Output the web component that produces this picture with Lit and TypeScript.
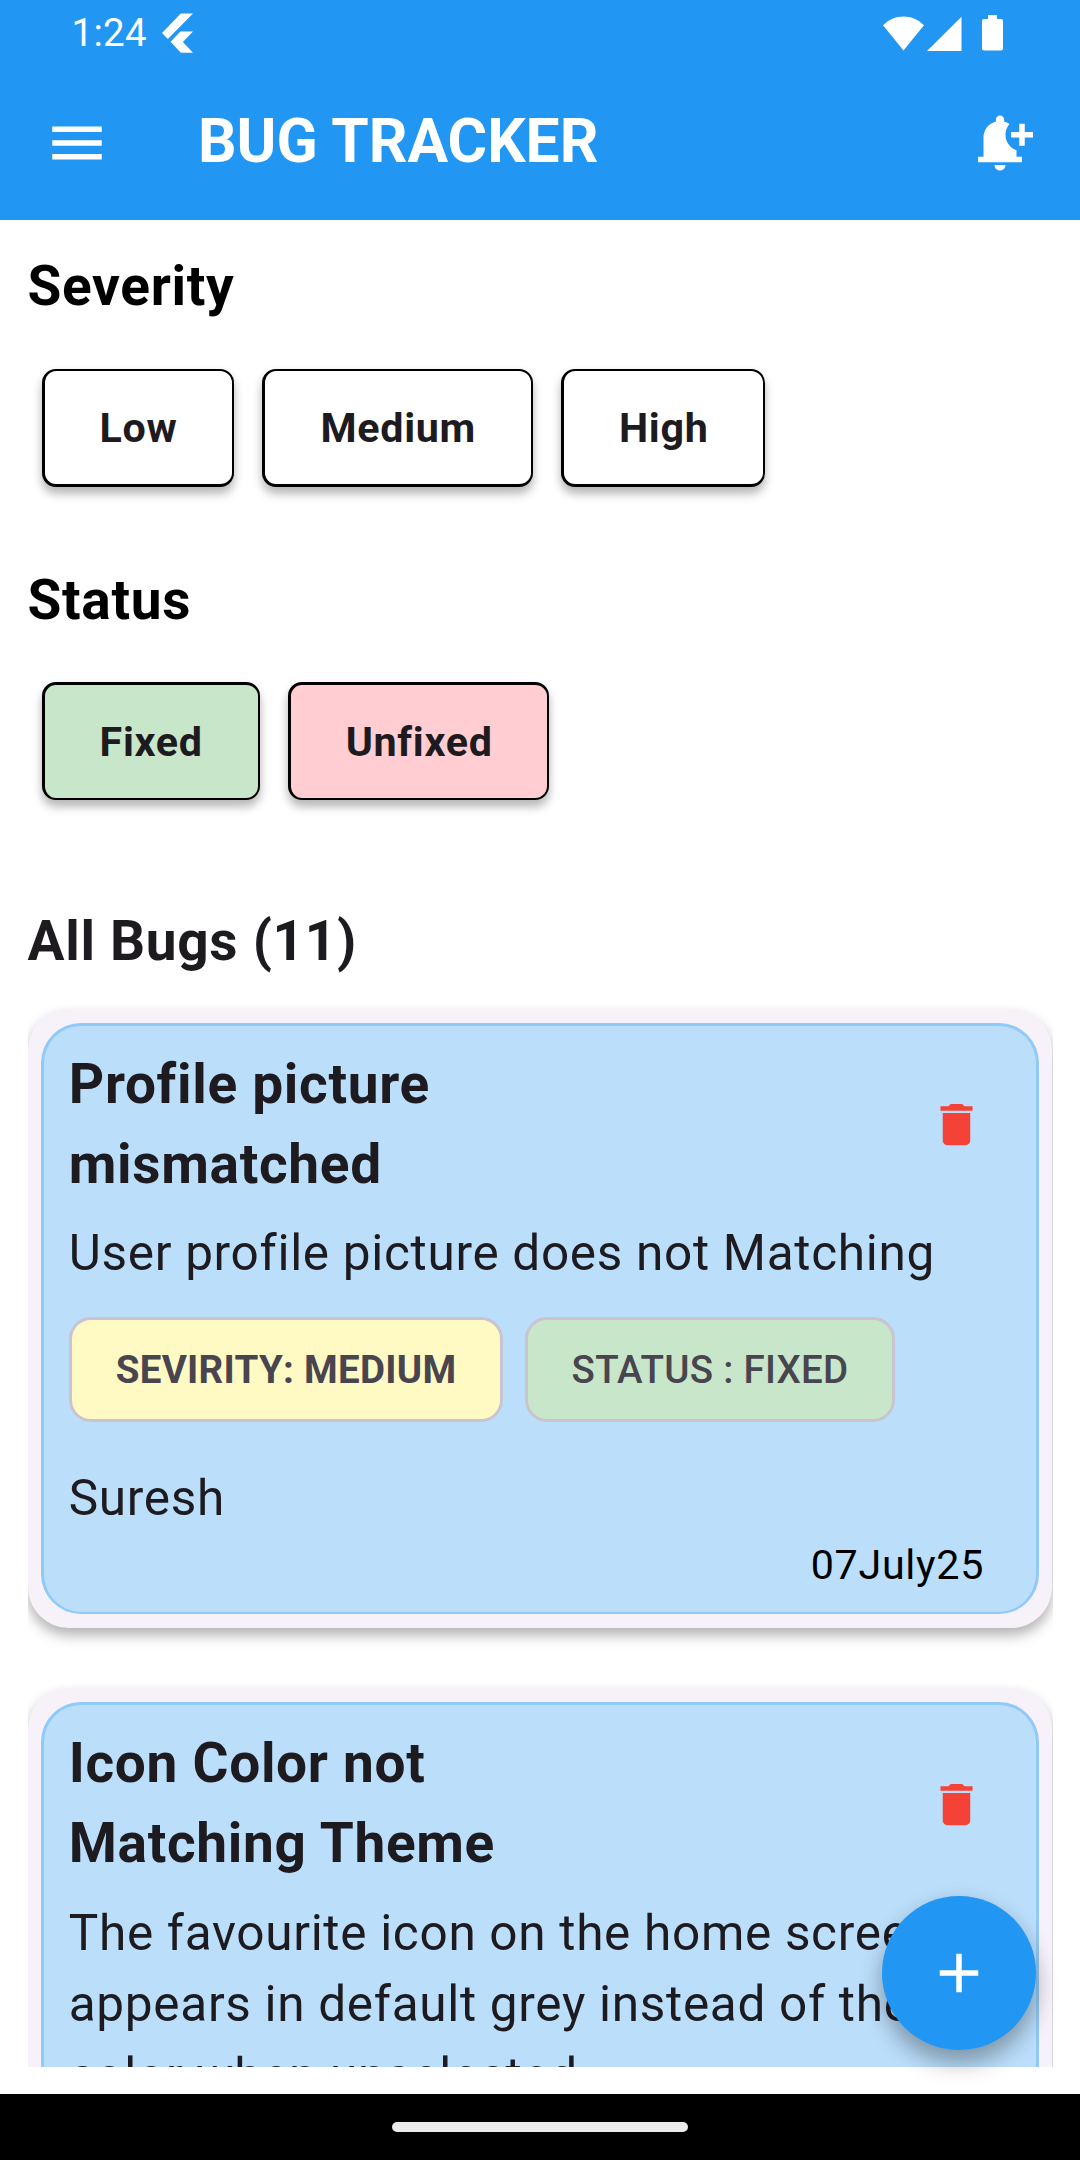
import { LitElement, html, css, nothing } from "lit";
import { customElement, property } from "lit/decorators.js";
import { classMap } from "lit/directives/class-map.js";

interface Bug {
  title: string;
  description: string;
  severity?: string;
  status?: string;
  reporter?: string;
  date?: string;
}

const bugs: Bug[] = [
  {
    title: "Profile picture mismatched",
    description: "User profile picture does not Matching",
    severity: "MEDIUM",
    status: "FIXED",
    reporter: "Suresh",
    date: "07July25",
  },
  {
    title: "Icon Color not Matching Theme",
    description:
      "The favourite icon on the home screen\nappears in default grey instead of theme\ncolor when unselected.",
  },
];

@customElement("status-bar")
class StatusBar extends LitElement {
  static styles = css`
    :host {
      display: flex;
      align-items: center;
      height: 66px;
      padding: 0 77px 0 71.5px;
      box-sizing: border-box;
      color: #fff;
      font-size: 38.5px;
      line-height: 46px;
    }
    .time {
      flex: 1;
      display: flex;
      align-items: center;
      gap: 15px;
      letter-spacing: 0.3px;
    }
    svg {
      display: block;
      fill: #fff;
    }
    .battery {
      margin-left: 20px;
    }
    .signal {
      margin-left: 3px;
    }
  `;

  render() {
    return html`
      <div class="time">
        <span>1:24</span>
        <svg width="31" height="40" viewBox="0 0 31 40">
          <path d="M18.8 0.5H31L5.8 26.1 0 20z" />
          <path d="M18.4 18.4H31L20.9 29 31 39.7H18.8L8.6 28.7z" />
        </svg>
      </div>
      <svg width="41" height="35" viewBox="0 0 41 35">
        <path d="M0 9.3C5.5 3.6 12.7.4 20.5.4S35.5 3.6 41 9.3L20.5 34.6z" />
      </svg>
      <svg class="signal" width="35" height="35" viewBox="0 0 35 35">
        <path d="M0 35L34.5 .7V35z" />
      </svg>
      <svg class="battery" width="21" height="36" viewBox="0 0 21 36">
        <path
          d="M6 0h9v4h4q2 0 2 2v27.5q0 2-2 2H2q-2 0-2-2V6q0-2 2-2h4z"
        />
      </svg>
    `;
  }
}

@customElement("app-bar")
class AppBar extends LitElement {
  static styles = css`
    :host {
      display: flex;
      align-items: center;
      height: 154px;
      padding: 0 47px 0 44px;
      box-sizing: border-box;
      color: #fff;
    }
    svg {
      display: block;
      width: 66px;
      height: 66px;
      fill: #fff;
    }
    .title {
      flex: 1;
      margin: 0 0 0 88px;
      padding-bottom: 3px;
      font-size: 60.5px;
      line-height: 76px;
      font-weight: 700;
    }
  `;

  render() {
    return html`
      <svg viewBox="0 0 24 24">
        <path d="M3 18h18v-2H3v2zm0-5h18v-2H3v2zm0-7v2h18V6H3z" />
      </svg>
      <h1 class="title">BUG TRACKER</h1>
      <svg viewBox="0 0 24 24">
        <path
          d="M10 20h4c0 1.1-.9 2-2 2s-2-.9-2-2zm4-11c0 2.61 1.67 4.83 4 5.66V17h2v2H4v-2h2v-7c0-2.79 1.91-5.14 4.5-5.8v-.7c0-.83.67-1.5 1.5-1.5s1.5.67 1.5 1.5v.7c.71.18 1.36.49 1.95.9A5.902 5.902 0 0 0 14 9zm10-1h-3V5h-2v3h-3v2h3v3h2v-3h3V8z"
        />
      </svg>
    `;
  }
}

@customElement("filter-button")
class FilterButton extends LitElement {
  @property() label = "";
  @property() tone = "plain";

  static styles = css`
    .box {
      display: flex;
      align-items: center;
      height: 118px;
      box-sizing: border-box;
      padding: 2px 54.9px 0 55.1px;
      border: solid #000;
      border-width: 2px 2px 3px 3px;
      border-radius: 14px;
      background: #fff;
      color: #1d1b20;
      font-size: 41.25px;
      line-height: 59px;
      font-weight: 700;
      letter-spacing: 0.6875px;
      white-space: nowrap;
      box-shadow:
        0 7px 10px rgba(0, 0, 0, 0.25),
        0 3px 12px rgba(0, 0, 0, 0.06);
    }
    .fixed {
      background: #c8e6c9;
      border-width: 3px 2px 2px 3px;
    }
    .unfixed {
      background: #ffcdd2;
      border-width: 3px 2px 2px 3px;
    }
  `;

  render() {
    return html`<div
      class=${classMap({
        box: true,
        fixed: this.tone === "fixed",
        unfixed: this.tone === "unfixed",
      })}
    >
      ${this.label}
    </div>`;
  }
}

@customElement("bug-card")
class BugCard extends LitElement {
  @property({ attribute: false }) bug!: Bug;

  static styles = css`
    :host {
      display: block;
      box-sizing: border-box;
      padding: 13.75px 13px 13.75px 13.75px;
      border-radius: 41px;
      background: #f7f2fa;
      box-shadow:
        0 8px 13px rgba(0, 0, 0, 0.26),
        0 3px 12px rgba(0, 0, 0, 0.06);
    }
    .panel {
      box-sizing: border-box;
      padding: 19.2px 24.5px 17.5px;
      border: 3px solid #90caf9;
      border-bottom-width: 2px;
      border-radius: 40px;
      background: #bbdefb;
      color: #1d1b20;
      letter-spacing: 0.6875px;
    }
    .head {
      display: flex;
      align-items: center;
      justify-content: space-between;
    }
    .title {
      margin: 0;
      width: 480px;
      font-size: 55px;
      line-height: 79.75px;
      font-weight: 700;
    }
    .delete {
      display: block;
      width: 55px;
      height: 55px;
      margin: 0 28px 0 0;
      fill: #f44336;
    }
    .description,
    .reporter {
      margin: 14px 0 0;
      font-size: 49.5px;
      line-height: 71.5px;
      white-space: pre;
    }
    .chips {
      display: flex;
      gap: 21.5px;
      margin-top: 26.8px;
    }
    .chip {
      display: flex;
      align-items: center;
      height: 105px;
      box-sizing: border-box;
      padding: 0 43.6px 0 44px;
      border: 3px solid #cac4d0;
      border-radius: 22px;
      color: #49454f;
      font-size: 38.5px;
      line-height: 55px;
      letter-spacing: 0.275px;
      white-space: pre;
    }
    .severity {
      background: #fff9c4;
      font-weight: 700;
    }
    .status {
      background: #c8e6c9;
      font-weight: 500;
    }
    .reporter {
      margin-top: 41px;
    }
    .date {
      margin: 1.5px 27.5px 0 0;
      text-align: right;
      color: #000;
      font-size: 41.25px;
      line-height: 59px;
    }
  `;

  render() {
    const b = this.bug;
    return html`
      <div class="panel">
        <div class="head">
          <h3 class="title">${b.title}</h3>
          <svg class="delete" viewBox="0 0 24 24">
            <path
              d="M6 19c0 1.1.9 2 2 2h8c1.1 0 2-.9 2-2V7H6v12zM19 4h-3.5l-1-1h-5l-1 1H5v2h14V4z"
            />
          </svg>
        </div>
        <p class="description">${b.description}</p>
        ${b.severity
          ? html`<div class="chips">
              <div class="chip severity">SEVIRITY: ${b.severity}</div>
              <div class="chip status">STATUS : ${b.status}</div>
            </div>`
          : nothing}
        ${b.reporter
          ? html`<p class="reporter">${b.reporter}</p>
              <p class="date">${b.date}</p>`
          : nothing}
      </div>
    `;
  }
}

@customElement("app-root")
class AppRoot extends LitElement {
  static styles = css`
    :host {
      display: flex;
      flex-direction: column;
      position: relative;
      width: 1080px;
      height: 2160px;
      overflow: hidden;
      background: #fff;
      font-family: Roboto, "Liberation Sans", sans-serif;
    }
    .top {
      flex: none;
      background: #2196f3;
    }
    .page {
      flex: 1;
      min-height: 0;
      display: flex;
      flex-direction: column;
      padding: 26.5px 27px 27.5px 27.5px;
    }
    .heading {
      margin: 0;
      flex: none;
      font-size: 55px;
      line-height: 78.5px;
      font-weight: 700;
      letter-spacing: 0.6875px;
      color: #000;
    }
    .filters {
      flex: none;
      display: flex;
      gap: 28px;
      padding: 44px 13.75px 73.5px 14px;
    }
    .filters.last {
      padding: 43px 13.75px 101.5px 14px;
    }
    .heading.count {
      color: #1d1b20;
    }
    .list {
      flex: 1;
      min-height: 0;
      margin-top: 15px;
      padding: 14px 1px 0 0;
      overflow: hidden;
      display: flex;
      flex-direction: column;
      gap: 60.5px;
    }
    bug-card {
      flex: none;
    }
    .nav {
      flex: none;
      height: 66px;
      background: #000;
      display: flex;
      align-items: center;
      justify-content: center;
    }
    .pill {
      width: 296px;
      height: 10px;
      border-radius: 5px;
      background: #ebebeb;
    }
    .fab {
      position: absolute;
      right: 44px;
      bottom: 110px;
      width: 154px;
      height: 154px;
      border-radius: 50%;
      background: #2196f3;
      display: flex;
      align-items: center;
      justify-content: center;
      box-shadow:
        0 14px 22px rgba(0, 0, 0, 0.27),
        0 5px 24px rgba(0, 0, 0, 0.08);
    }
    .fab svg {
      width: 66px;
      height: 66px;
      fill: #fff;
    }
  `;

  render() {
    return html`
      <header class="top">
        <status-bar></status-bar>
        <app-bar></app-bar>
      </header>
      <main class="page">
        <h2 class="heading">Severity</h2>
        <div class="filters">
          <filter-button label="Low"></filter-button>
          <filter-button label="Medium"></filter-button>
          <filter-button label="High"></filter-button>
        </div>
        <h2 class="heading">Status</h2>
        <div class="filters last">
          <filter-button label="Fixed" tone="fixed"></filter-button>
          <filter-button label="Unfixed" tone="unfixed"></filter-button>
        </div>
        <h2 class="heading count">All Bugs (11)</h2>
        <div class="list">
          ${bugs.map((b) => html`<bug-card .bug=${b}></bug-card>`)}
        </div>
      </main>
      <footer class="nav"><div class="pill"></div></footer>
      <div class="fab">
        <svg viewBox="0 0 24 24">
          <path d="M19 13h-6v6h-2v-6H5v-2h6V5h2v6h6v2z" />
        </svg>
      </div>
    `;
  }
}
